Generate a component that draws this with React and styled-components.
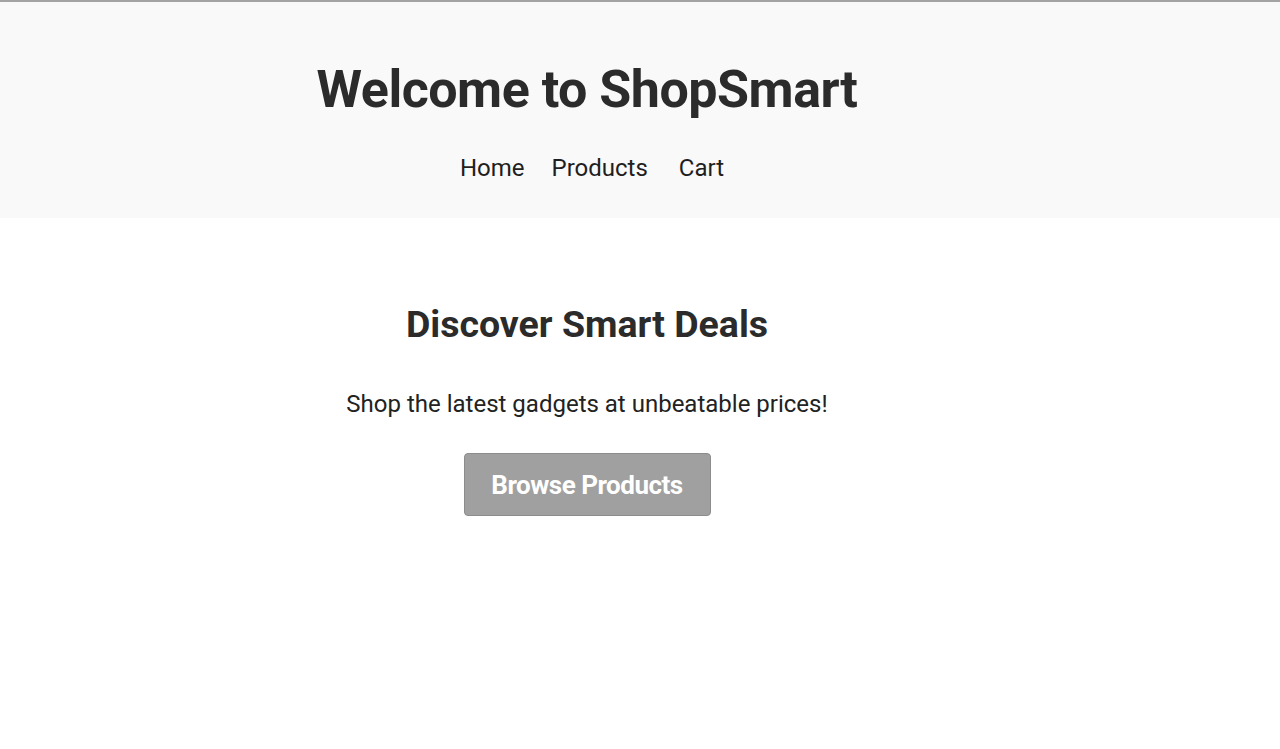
import React from "react";
import styled, { createGlobalStyle } from "styled-components";

const GlobalStyle = createGlobalStyle`
  html, body {
    margin: 0;
    padding: 0;
    background: #ffffff;
    font-family: Roboto, "Liberation Sans", Arial, sans-serif;
    color: #2a2a2a;
  }
`;

export default function App() {
  return (
    <>
      <GlobalStyle />
      <Header>
        <Column>
          <Title>Welcome to ShopSmart</Title>
          <Nav>
            <NavLink href="#">Home</NavLink>
            <NavLink href="#">Products</NavLink>
            <NavLink href="#" $wide>
              Cart
            </NavLink>
          </Nav>
        </Column>
      </Header>
      <Main>
        <Column>
          <Heading>Discover Smart Deals</Heading>
          <Lead>Shop the latest gadgets at unbeatable prices!</Lead>
          <Button>Browse Products</Button>
        </Column>
      </Main>
    </>
  );
}

const Header = styled.header`
  background: #f9f9f9;
  border-top: 2px solid #a3a3a3;
  height: 216px;
  box-sizing: content-box;
`;

const Column = styled.div`
  width: 1174px;
  display: flex;
  flex-direction: column;
  align-items: center;
  text-align: center;
`;

const Title = styled.h1`
  margin: 58px 0 0;
  font-size: 52px;
  font-weight: 700;
  line-height: 60px;
  letter-spacing: -0.5px;
  color: #2b2b2b;
`;

const Nav = styled.nav`
  display: flex;
  margin-top: 32px;
  margin-left: 10px;
  gap: 27px;
`;

const NavLink = styled.a`
  font-size: 24px;
  line-height: 32px;
  font-weight: 400;
  color: #1f1f1f;
  text-decoration: none;
  margin-left: ${(p) => (p.$wide ? "4px" : "0")};
`;

const Main = styled.main`
  padding-top: 82px;
`;

const Heading = styled.h2`
  margin: 0;
  font-size: 37.5px;
  line-height: 48px;
  font-weight: 700;
  color: #2b2b2b;
`;

const Lead = styled.p`
  margin: 40px 0 0;
  font-size: 24px;
  line-height: 32px;
  color: #222;
`;

const Button = styled.button`
  margin-top: 33px;
  width: 247px;
  height: 63px;
  background: #a0a0a0;
  border: 1px solid #8c8c8c;
  border-radius: 4px;
  color: #fff;
  font-family: Roboto, "Liberation Sans", Arial, sans-serif;
  font-size: 26px;
  font-weight: 700;
  letter-spacing: -0.5px;
  cursor: pointer;
`;
